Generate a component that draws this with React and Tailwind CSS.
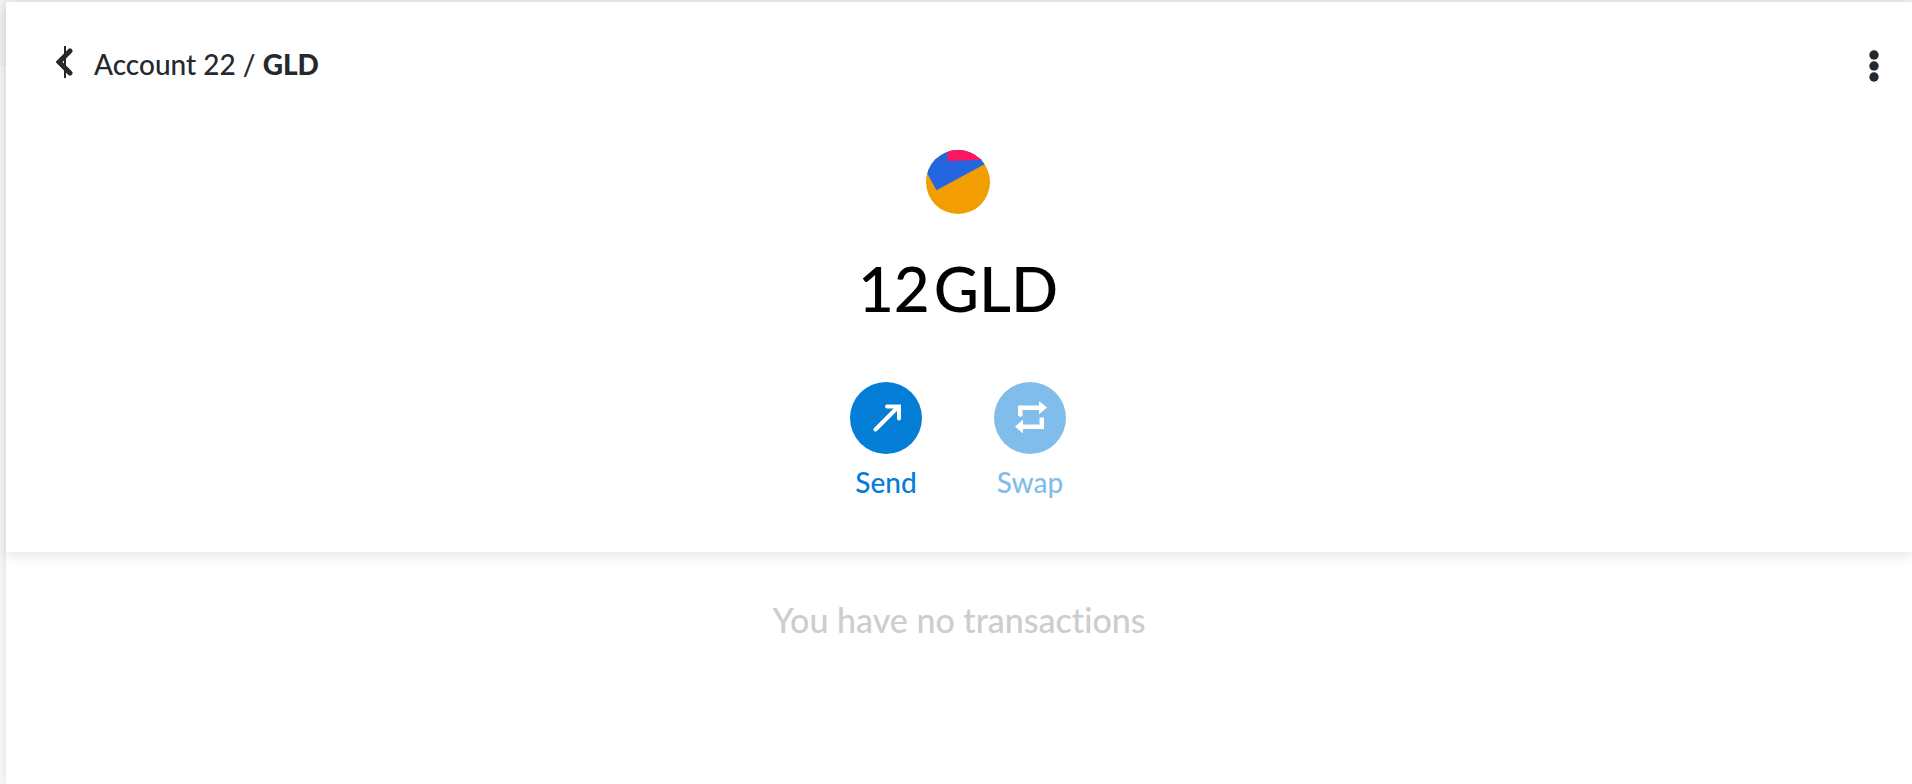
const DotsIcon = () => (
  <svg viewBox="0 0 10 32" className="h-8 w-[10px]" fill="currentColor" aria-hidden="true">
    <circle cx="5" cy="5" r="4.7" />
    <circle cx="5" cy="16" r="4.7" />
    <circle cx="5" cy="27" r="4.7" />
  </svg>
);

const BackIcon = () => (
  <svg viewBox="0 0 18 32" className="h-8 w-[18px]" fill="none" stroke="currentColor" aria-hidden="true">
    <path d="M14 5 3 16l11 11" strokeWidth="5" strokeLinecap="round" strokeLinejoin="miter" />
    <path d="M9 0v32" strokeWidth="2" />
  </svg>
);

const TokenIcon = () => (
  <svg viewBox="0 0 64 64" className="size-16 rounded-full" role="img" aria-label="GLD token">
    <rect width="64" height="64" fill="#F29E02" />
    <path d="M-10-10H66L58.500 14.300 10.500 40.300-10 3Z" fill="#2465E1" />
    <path d="M21.500-10H70V9.500L21.500 11Z" fill="#FB1860" />
  </svg>
);

const SendIcon = () => (
  <svg viewBox="0 0 30 28" className="h-7 w-[30px]" fill="none" stroke="currentColor" strokeWidth="4" strokeLinecap="round" aria-hidden="true">
    <path d="M4.500 25.500 27 3" />
    <path d="M16 2.500H28V14.500" />
  </svg>
);

const SwapIcon = () => (
  <svg viewBox="0 0 34 34" className="size-[34px]" fill="currentColor" aria-hidden="true">
    <path d="M5 15V4.500H26V0L34 6.500 26 13.300V9H9.500V15Q7 16.500 5 15Z" />
    <path d="M31 17V28H10V32.500L2 25.500 10 18.500V23.500H26.500V17Q29 15.500 31 17Z" />
  </svg>
);

const Action = ({ icon, label, disabled }) => (
  <button
    type="button"
    disabled={disabled}
    className="flex w-[72px] flex-col items-center gap-[10px] text-[#037DD6] disabled:opacity-50"
  >
    <span className="flex size-[72px] items-center justify-center rounded-full bg-[#037DD6] text-white">{icon}</span>
    <span className="text-[28px] leading-9 font-medium">{label}</span>
  </button>
);

export default function App() {
  return (
    <div className="min-h-screen bg-[linear-gradient(#f2f4f6_66px,#f9f9f9_66px)] pt-[2px] pl-[6px] font-['Lato',sans-serif] [font-variant-ligatures:no-common-ligatures]">
      <main className="min-h-[calc(100vh-2px)] bg-white shadow-[0_0_14px_rgba(0,0,0,0.1)]">
        <section className="pb-13 shadow-[0_4px_12px_rgba(0,0,0,0.1)]">
          <header className="flex items-center justify-between pt-11 pr-[33px] pl-[50px] text-[#24292E]">
            <nav className="flex items-center gap-5 text-[28px] leading-9 font-medium">
              <button type="button" aria-label="Back" className="pb-1"><BackIcon /></button>
              <span>Account 22 / <b className="font-black">GLD</b></span>
            </nav>
            <button type="button" aria-label="Asset options" className="pt-1"><DotsIcon /></button>
          </header>
          <div className="flex flex-col items-center pt-17 pr-[2px]">
            <TokenIcon />
            <h1 className="mt-[34px] flex gap-1 text-[62px] leading-20 font-medium text-black">
              <span>12</span> <span>GLD</span>
            </h1>
            <div className="mt-[54px] flex gap-18">
              <Action icon={<SendIcon />} label="Send" />
              <Action icon={<SwapIcon />} label="Swap" disabled />
            </div>
          </div>
        </section>
        <p className="pt-12 text-center text-[34px] leading-10 font-medium text-[#cdcdcd]">You have no transactions</p>
      </main>
    </div>
  );
}
